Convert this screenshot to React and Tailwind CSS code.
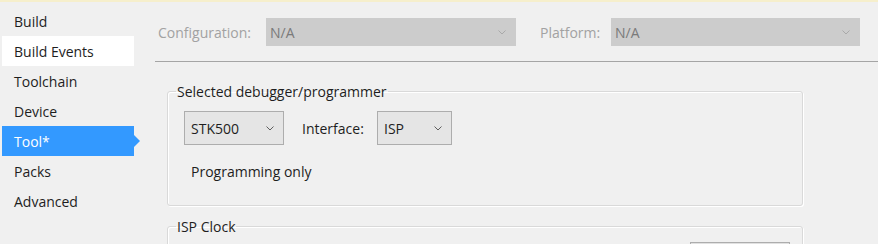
import React from 'react'

const navItems = ['Build', 'Build Events', 'Toolchain', 'Device', 'Tool*', 'Packs', 'Advanced']

const Chevron = ({ color = '#5f5f5f' }) => (
    <svg width="8" height="5" viewBox="0 0 8 5" className="shrink-0">
        <path d="M0.5 0.5 L4 4 L7.5 0.5" fill="none" stroke={color} strokeWidth="1" />
    </svg>
)

const Combo = ({ value, width }) => (
    <div className={`${width} h-[34px] flex items-center justify-between pl-[6px] pr-[9px] bg-[#e5e5e5] border border-[#adadad] text-[#1e1e1e]`}>
        <span>{value}</span>
        <Chevron />
    </div>
)

const GroupBox = ({ title, children, className = '' }) => (
    <fieldset className={`border border-[#d9d9d9] rounded-[3px] shadow-[1px_1px_0_#fff,inset_1px_1px_0_#fff] ${className}`}>
        <legend className="ml-[8px] px-[1px] leading-[19px] text-[#1e1e1e]">{title}</legend>
        {children}
    </fieldset>
)

export default function App() {
    return (
        <div className="w-[878px] h-[244px] overflow-hidden bg-[#f0f0f0] font-['Open_Sans',sans-serif] text-[14px]">
            {/* info bar edge */}
            <div className="h-[2px] bg-[#f6efcc]" />

            <div className="flex">
                {/* Sidebar */}
                <nav className="w-[155px] shrink-0 pt-[4px] pl-[2px]">
                    {navItems.map((item) => {
                        const active = item === 'Tool*'
                        const hover = item === 'Build Events'
                        return (
                            <div
                                key={item}
                                className={`relative w-[132px] h-[30px] flex items-center pl-[12px] ${active ? 'bg-[#3399ff] text-white' : hover ? 'bg-white text-[#1e1e1e]' : 'text-[#1e1e1e]'}`}
                            >
                                {item}
                                {active && (
                                    <span className="absolute left-full top-1/2 -translate-y-1/2 w-0 h-0 border-y-[6px] border-y-transparent border-l-[6px] border-l-[#3399ff]" />
                                )}
                            </div>
                        )
                    })}
                </nav>

                {/* Main */}
                <main className="flex-1 pt-[16px]">
                    <div className="flex items-center h-[28px] pl-[3px] text-[#a2a2a2]">
                        <span className="w-[108px]">Configuration:</span>
                        <div className="w-[250px] h-[28px] flex items-center justify-between pl-[4px] pr-[10px] bg-[#cccccc] text-[#7a7a7a]">
                            <span>N/A</span>
                            <Chevron color="#a9a9a9" />
                        </div>
                        <span className="ml-[24px] w-[71px]">Platform:</span>
                        <div className="w-[249px] h-[28px] flex items-center justify-between pl-[4px] pr-[10px] bg-[#cccccc] text-[#7a7a7a]">
                            <span>N/A</span>
                            <Chevron color="#a9a9a9" />
                        </div>
                    </div>

                    <div className="mt-[15px] border-t border-[#a5a5a5]" />

                    <div className="pl-[12px] w-[648px] pt-[20px]">
                        <GroupBox title="Selected debugger/programmer" className="h-[124px]">
                            <div className="pl-[16px] pt-[10px]">
                                <div className="flex items-center">
                                    <Combo value="STK500" width="w-[100px]" />
                                    <span className="ml-[18px] w-[75px] text-[#1e1e1e]">Interface:</span>
                                    <Combo value="ISP" width="w-[75px]" />
                                </div>
                                <p className="mt-[16px] pl-[7px] text-[#1e1e1e]">Programming only</p>
                            </div>
                        </GroupBox>

                        <GroupBox title="ISP Clock" className="mt-[11px] h-[60px]">
                            <div className="flex justify-end pr-[12px] pt-[6px]">
                                <div className="w-[100px] h-[30px] bg-[#e1e1e1] border border-[#adadad]" />
                            </div>
                        </GroupBox>
                    </div>
                </main>
            </div>
        </div>
    )
}
